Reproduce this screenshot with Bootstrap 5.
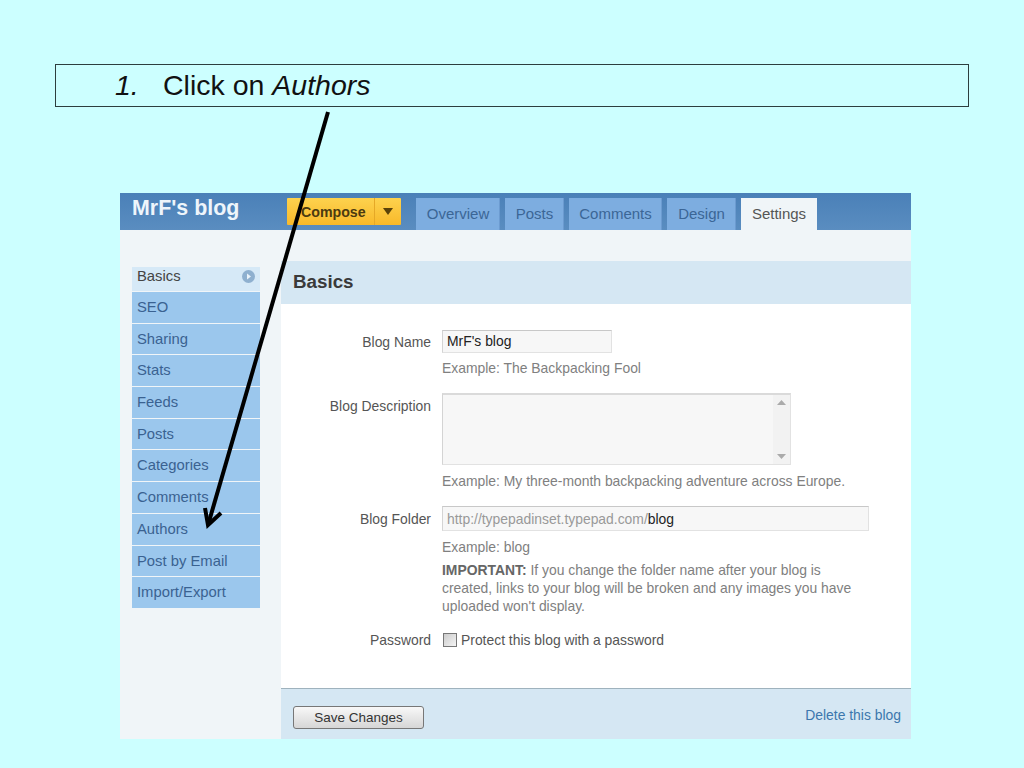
<!DOCTYPE html>
<html lang="en">
<head>
<meta charset="utf-8">
<title>Click on Authors</title>
<link href="https://cdn.jsdelivr.net/npm/bootstrap@5.3.0/dist/css/bootstrap.min.css" rel="stylesheet">
<style>
html,body{height:768px;overflow:hidden}
body{background:#ccffff;font-family:"Liberation Sans",Arial,sans-serif;color:#444;position:relative;padding-top:64px}
.step-box{margin-left:55px;width:914px;height:43px;border:1px solid #2c3e3e;background:#ccffff;color:#111;font-size:28.500px;line-height:41px;padding-left:59px;white-space:nowrap}
.step-num{display:inline-block;width:48px;font-style:italic}
.shot{margin:86px 0 0 120px;width:791px;height:546px;background:#f0f5f8;font-size:13.900px;overflow:hidden}
.shot-head{height:37px;background:linear-gradient(#4a80b8,#5a8dc0);padding-left:12px}
.shot-title{width:155px;color:#eef5fb;font-weight:700;font-size:21.400px;line-height:30px}
.compose-group{margin-top:5px;height:27px;width:114px;background:linear-gradient(#fdd24e,#f8b92a);border-radius:1px;color:#4b3a10;font-weight:700;font-size:14.200px;line-height:29px}
.compose-text{width:88px;padding-left:14px;border-right:1px solid #e5a827}
.compose-caret{width:26px}
.tab-row{margin-left:15px;margin-top:5px;gap:5px}
.tab-item{height:32px;background:#7dade0;color:#3b6696;line-height:32px;text-align:center;font-size:15px;box-shadow:inset -1px 0 0 #6c9bd0}
.tab-w1{width:84px}.tab-w2{width:59px}.tab-w3{width:93px}.tab-w4{width:69px}.tab-w5{width:76px}
.tab-item.is-active{background:#f0f5f8;color:#555;box-shadow:none}
.side-col{width:161px;padding:37px 0 0 12px}
.side-list{width:128px;gap:1px}
.side-item{height:30.700px;background:#9bc7ed;color:#3a6291;padding-left:5px;line-height:31px;font-size:14.800px}
.side-item.is-current{height:24px;background:#d6e9f7;color:#444;line-height:18px;justify-content:space-between}
.basics-dot{margin:3px 1px 0 0}
.main-col{width:630px;margin-top:31px;height:478px;background:#fff}
.main-title{height:43px;background:#d5e7f3;color:#3a3a3a;font-weight:700;font-size:18.800px;line-height:42px;padding-left:12px}
.form-area{height:384px;padding-top:26px}
.form-line{display:flex}
.gap-desc{margin-top:16px}
.gap-folder{margin-top:16px}
.gap-pass{margin-top:15px}
.label-col{width:150px;text-align:right;flex:none;color:#555}
.label-name{padding-top:2px}
.label-desc{padding-top:3px}
.label-folder{padding-top:3px}
.field-col{margin-left:11px;width:430px;flex:none}
.fake-field{background:#f7f7f7;border:1px solid #e2e2e2;border-top-color:#c8c8c8;border-left-color:#d4d4d4;color:#222}
.name-field{width:170px;height:23px;line-height:21px;padding-left:4px}
.desc-field{width:349px;height:72px;border-top:2px solid #dadada;position:relative}
.desc-bar{position:absolute;right:0;top:0;bottom:0;width:17px;background:#f2f2f2;display:flex;flex-direction:column;justify-content:space-between;align-items:center;padding:5px 0}
.folder-field{width:427px;height:25px;line-height:24px;padding-left:4px;color:#999;white-space:nowrap}
.folder-field b{font-weight:400;color:#222}
.hint{color:#808080;line-height:18px}
.hint b{color:#666}
.hint-a{margin-top:6px}
.hint-b{margin-top:7px}
.hint-c{margin-top:5px;width:425px}
.fake-check{width:14px;height:14px;border:1px solid #777;background:linear-gradient(135deg,#ccc,#f4f4f4);display:inline-block;margin-left:1px}
.pass-text{color:#555}
.pass-row{gap:4px}
.foot-bar{height:51px;background:#d5e7f3;border-top:1px solid #9fb2bd;padding:0 10px 0 12px}
.save-btn{width:131px;height:23px;margin-top:6px;border:1px solid #777;border-radius:3px;background:linear-gradient(#f8f8f8,#d6d6d6);color:#333;font-size:13.500px;line-height:21px;text-align:center}
.del-link{color:#3c77ad;text-decoration:none;margin-top:2px}
.arrow-layer{position:absolute;left:0;top:0;pointer-events:none}
</style>
</head>
<body>
<div class="step-box"><span class="step-num">1.</span>Click on <em>Authors</em></div>

<div class="shot">
  <div class="shot-head d-flex">
    <div class="shot-title">MrF's blog</div>
    <div class="compose-group d-flex">
      <div class="compose-text">Compose</div>
      <div class="compose-caret d-flex justify-content-center align-items-center"><svg width="10" height="7" viewBox="0 0 10 7"><path d="M0 0h10L5 7z" fill="#5a4209"/></svg></div>
    </div>
    <div class="tab-row d-flex">
      <div class="tab-item tab-w1">Overview</div>
      <div class="tab-item tab-w2">Posts</div>
      <div class="tab-item tab-w3">Comments</div>
      <div class="tab-item tab-w4">Design</div>
      <div class="tab-item tab-w5 is-active">Settings</div>
    </div>
  </div>
  <div class="d-flex">
    <div class="side-col">
      <div class="side-list d-flex flex-column">
        <div class="side-item is-current d-flex pe-1"><span>Basics</span>
          <svg class="basics-dot" width="13" height="13" viewBox="0 0 13 13"><circle cx="6.500" cy="6.500" r="6.500" fill="#8fb0cf"/><path d="M5 3.500l4 3-4 3z" fill="#eaf3fa"/></svg></div>
        <div class="side-item">SEO</div>
        <div class="side-item">Sharing</div>
        <div class="side-item">Stats</div>
        <div class="side-item">Feeds</div>
        <div class="side-item">Posts</div>
        <div class="side-item">Categories</div>
        <div class="side-item">Comments</div>
        <div class="side-item">Authors</div>
        <div class="side-item">Post by Email</div>
        <div class="side-item">Import/Export</div>
      </div>
    </div>
    <div class="main-col">
      <div class="main-title">Basics</div>
      <div class="form-area">
        <div class="form-line">
          <div class="label-col label-name">Blog Name</div>
          <div class="field-col">
            <div class="fake-field name-field">MrF's blog</div>
            <div class="hint hint-a">Example: The Backpacking Fool</div>
          </div>
        </div>
        <div class="form-line gap-desc">
          <div class="label-col label-desc">Blog Description</div>
          <div class="field-col">
            <div class="fake-field desc-field"><div class="desc-bar">
              <svg width="9" height="5" viewBox="0 0 9 5"><path d="M0 5L4.500 0 9 5z" fill="#aaa"/></svg>
              <svg width="9" height="5" viewBox="0 0 9 5"><path d="M0 0L4.500 5 9 0z" fill="#aaa"/></svg>
            </div></div>
            <div class="hint hint-b">Example: My three-month backpacking adventure across Europe.</div>
          </div>
        </div>
        <div class="form-line gap-folder">
          <div class="label-col label-folder">Blog Folder</div>
          <div class="field-col">
            <div class="fake-field folder-field">http://typepadinset.typepad.com/<b>blog</b></div>
            <div class="hint hint-b">Example: blog</div>
            <div class="hint hint-c"><b>IMPORTANT:</b> If you change the folder name after your blog is created, links to your blog will be broken and any images you have uploaded won't display.</div>
          </div>
        </div>
        <div class="form-line gap-pass">
          <div class="label-col">Password</div>
          <div class="field-col d-flex align-items-center pass-row"><span class="fake-check"></span><span class="pass-text">Protect this blog with a password</span></div>
        </div>
      </div>
      <div class="foot-bar d-flex justify-content-between align-items-center">
        <div class="save-btn">Save Changes</div>
        <a class="del-link" href="#">Delete this blog</a>
      </div>
    </div>
  </div>
</div>

<svg class="arrow-layer" width="1024" height="768" viewBox="0 0 1024 768">
  <path d="M328 112L208 525" stroke="#000" stroke-width="4" fill="none"/>
  <path d="M205 508L208 525L221 513" stroke="#000" stroke-width="4" fill="none"/>
</svg>
</body>
</html>
